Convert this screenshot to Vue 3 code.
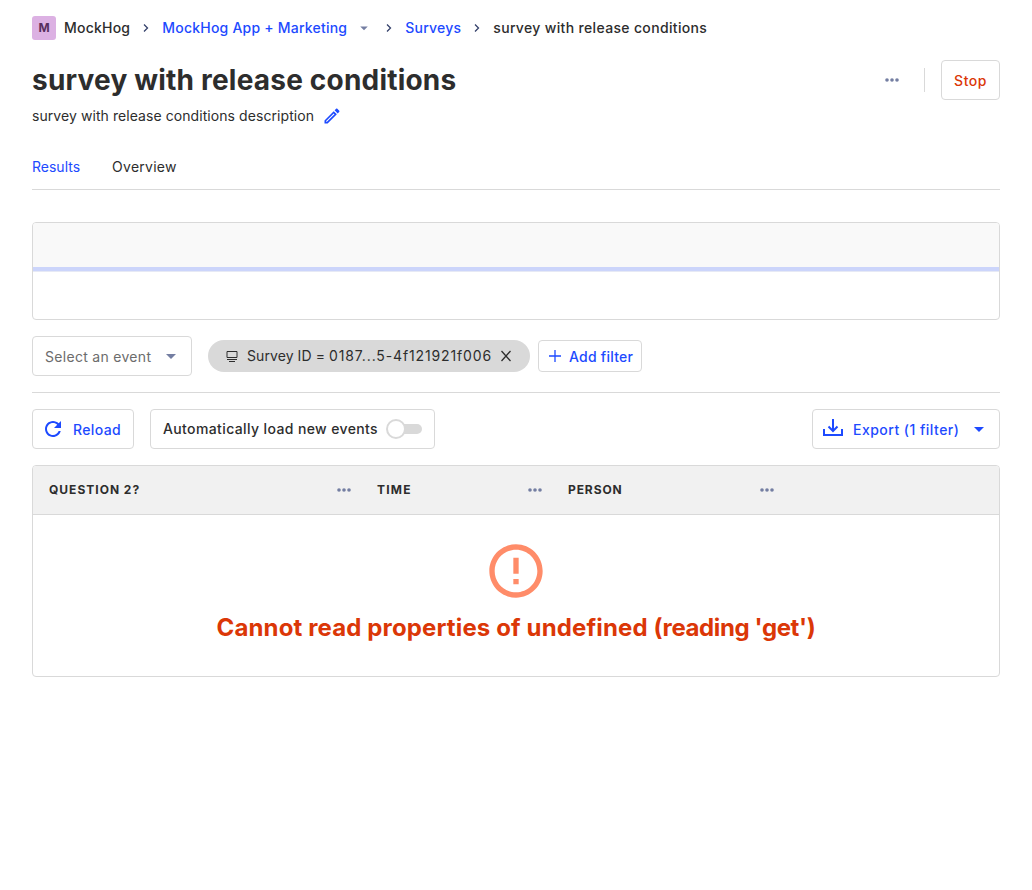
<script setup>
const columns = [
  { name: 'Question 2?', cls: 'col-question' },
  { name: 'Time', cls: 'col-time' },
  { name: 'Person', cls: 'col-person' },
]
</script>

<template>
  <main class="page">
    <nav class="breadcrumbs">
      <span class="lettermark">M</span>
      <span class="crumb first">MockHog</span>
      <svg class="chevron" viewBox="0 0 16 16"><path d="M6 4.5 9.5 8 6 11.5" /></svg>
      <a class="crumb link">MockHog App + Marketing</a>
      <svg class="small-caret" viewBox="0 0 24 24"><path d="M7 10l5 5 5-5z" /></svg>
      <svg class="chevron" viewBox="0 0 16 16"><path d="M6 4.5 9.5 8 6 11.5" /></svg>
      <a class="crumb link">Surveys</a>
      <svg class="chevron" viewBox="0 0 16 16"><path d="M6 4.5 9.5 8 6 11.5" /></svg>
      <span class="crumb current">survey with release conditions</span>
    </nav>

    <header class="title-row">
      <h1>survey with release conditions</h1>
      <div class="actions">
        <svg class="dots" viewBox="0 0 24 24"><circle cx="7" cy="12" r="1.8" /><circle cx="12" cy="12" r="1.8" /><circle cx="17" cy="12" r="1.8" /></svg>
        <span class="separator"></span>
        <button class="btn stop"><span>Stop</span></button>
      </div>
    </header>

    <div class="description">
      <span>survey with release conditions description</span>
      <svg viewBox="0 0 24 24"><path d="M14.06 9.02l.92.92L5.92 19H5v-.92l9.06-9.06M17.66 3c-.25 0-.51.1-.7.29l-1.83 1.83 3.75 3.75 1.83-1.83c.39-.39.39-1.02 0-1.41l-2.34-2.34c-.2-.2-.45-.29-.71-.29zm-3.6 3.19L3 17.25V21h3.75L17.81 9.94l-3.75-3.75z" /></svg>
    </div>

    <nav class="tabs">
      <a class="tab active">Results</a>
      <a class="tab overview">Overview</a>
    </nav>

    <section class="summary">
      <div class="summary-head"></div>
      <div class="loader"></div>
    </section>

    <div class="filters">
      <button class="btn select">
        <span>Select an event</span>
        <svg viewBox="0 0 24 24"><path d="M7 10l5 5 5-5z" /></svg>
      </button>
      <div class="pill">
        <svg class="event-icon" viewBox="0 0 14 14"><path d="M2 2.5h10v6H2zM2 10.5h10M4 12.5h6" /></svg>
        <span class="pill-text">Survey ID = <span class="pill-value">0187...5-4f121921f006</span></span>
        <svg class="close" viewBox="0 0 12 12"><path d="M1.5 1l9 10M10.5 1l-9 10" /></svg>
      </div>
      <button class="btn add">
        <svg viewBox="0 0 14 14"><path d="M7 1v12M1 7h12" /></svg>
        <span>Add filter</span>
      </button>
    </div>

    <div class="toolbar">
      <button class="btn reload">
        <svg viewBox="0 0 24 24"><path d="M17.65 6.35C16.2 4.9 14.21 4 12 4c-4.42 0-7.99 3.58-7.99 8s3.57 8 7.99 8c3.73 0 6.84-2.55 7.73-6h-2.08c-.82 2.33-3.04 4-5.65 4-3.31 0-6-2.69-6-6s2.69-6 6-6c1.66 0 3.14.69 4.22 1.78L13 11h7V4l-2.35 2.35z" /></svg>
        <span>Reload</span>
      </button>
      <label class="btn auto">
        <span>Automatically load new events</span>
        <span class="switch"><span class="track"></span><span class="handle"></span></span>
      </label>
      <button class="btn export">
        <svg class="download" viewBox="0 0 24 24"><path d="M3 12v6h18v-6M12 2v12M7.5 9.5l4.5 4.5 4.5-4.5" /></svg>
        <span>Export (1 filter)</span>
        <svg class="caret" viewBox="0 0 24 24"><path d="M7 10l5 5 5-5z" /></svg>
      </button>
    </div>

    <section class="table">
      <div class="thead">
        <div v-for="c in columns" :key="c.name" class="th" :class="c.cls">
          <span>{{ c.name }}</span>
          <svg class="dots" viewBox="0 0 24 24"><circle cx="7" cy="12" r="1.8" /><circle cx="12" cy="12" r="1.8" /><circle cx="17" cy="12" r="1.8" /></svg>
        </div>
      </div>
      <div class="error">
        <svg viewBox="0 0 24 24"><path d="M11 15h2v2h-2zm0-8h2v6h-2zm.99-5C6.47 2 2 6.48 2 12s4.47 10 9.99 10C17.52 22 22 17.52 22 12S17.52 2 11.99 2zM12 20c-4.42 0-8-3.58-8-8s3.58-8 8-8 8 3.58 8 8-3.58 8-8 8z" /></svg>
        <h2>Cannot read properties of undefined <span class="detail">(reading 'get')</span></h2>
      </div>
    </section>
  </main>
</template>

<style>
body { background: #fff; }
</style>

<style scoped>
* { box-sizing: border-box; }
.page { padding: 16px 32px; font: 400 14px/20px Inter, sans-serif; color: #2d2d2d; }
svg { flex: none; display: block; }
span, a, h1, h2 { white-space: nowrap; }
.breadcrumbs { display: flex; align-items: center; height: 24px; font-weight: 500; }
.lettermark { width: 24px; height: 24px; border-radius: 3px; background: #dcb1e3; color: #572e5e; font-weight: 700; font-size: 12px; line-height: 24px; text-align: center; margin-right: 8px; }
.crumb { letter-spacing: 0.22px; }
.current { letter-spacing: 0.34px; }
.link { color: #1d4aff; }
.chevron { width: 16px; height: 16px; margin: 0 8px; fill: none; stroke: #35416b; stroke-width: 1.3; }
.small-caret { width: 18px; height: 18px; margin: 0 0 0 8px; fill: #747ea2; }
.title-row { display: flex; justify-content: space-between; align-items: center; height: 40px; margin-top: 20px; }
h1 { margin: 0; font-size: 28px; line-height: 40px; font-weight: 700; letter-spacing: 0.2px; }
.actions { display: flex; align-items: center; }
.dots { width: 24px; height: 24px; fill: #747ea2; }
.separator { width: 1px; height: 24px; background: #d9d9d9; margin: 0 16px 0 20px; }
.btn { display: flex; align-items: center; height: 40px; padding: 0 12px; background: #fff; border: 1px solid #d9d9d9; border-radius: 4px; font: 500 14px/20px Inter, sans-serif; color: #1d4aff; }
.stop { color: #db3707; width: 59px; justify-content: center; letter-spacing: 0.5px; }
button > span { position: relative; top: 1px; }
.description { display: flex; align-items: center; height: 32px; letter-spacing: 0.07px; }
.description svg { width: 20px; height: 20px; margin-left: 8px; fill: #1d4aff; }
.tabs { display: flex; gap: 32px; height: 46px; margin-top: 12px; padding: 13px 0; margin-bottom: 32px; border-bottom: 1px solid #d9d9d9; }
.active { color: #1d4aff; }
.overview { letter-spacing: 0.25px; }
.summary { height: 98px; border: 1px solid #d9d9d9; border-radius: 4px; overflow: hidden; }
.summary-head { height: 44px; background: #f9f9f9; }
.loader { height: 5px; background: #ccd5fb; border-bottom: 1px solid #e6e9f5; }
.filters { display: flex; align-items: center; height: 73px; border-bottom: 1px solid #d9d9d9; }
.select { width: 160px; font-weight: 400; color: #6c6c6c; justify-content: space-between; padding-right: 8px; margin-right: 16px; letter-spacing: 0.3px; }
.select svg { width: 24px; height: 24px; fill: #747ea2; }
.pill { display: flex; align-items: center; width: 322px; height: 32px; padding-left: 17px; border-radius: 16px; background: #d9d9d9; margin-right: 8px; }
.pill-text { width: 245px; letter-spacing: 0.08px; }
.pill-value { letter-spacing: 0.87px; }
.event-icon { width: 14px; height: 14px; fill: none; stroke: #2d2d2d; stroke-width: 1; margin-right: 8px; }
.close { width: 12px; height: 12px; fill: none; stroke: #2d2d2d; stroke-width: 1.3; margin-left: 8px; }
.add { width: 104px; height: 32px; padding: 0 0 0 9px; letter-spacing: 0.24px; }
.add svg { width: 14px; height: 14px; fill: none; stroke: #1d4aff; stroke-width: 1.3; margin-right: 7px; }
.toolbar { display: flex; gap: 16px; margin: 16px 0; }
.reload { width: 102px; padding: 0 0 0 8px; letter-spacing: 0.37px; }
.reload svg { width: 24px; height: 24px; fill: #1d4aff; margin-right: 8px; }
.auto { width: 285px; color: #2d2d2d; justify-content: space-between; letter-spacing: 0.38px; }
.switch { position: relative; display: block; width: 36px; height: 20px; }
.track { position: absolute; left: 4px; right: 0; top: 5px; height: 10px; border-radius: 5px; background: #d9d9d9; }
.handle { position: absolute; left: 0; top: 0; width: 20px; height: 20px; border-radius: 50%; border: 2px solid #d9d9d9; background: #fff; }
.export { width: 188px; margin-left: auto; padding: 0 8px; letter-spacing: 0.48px; }
.download { width: 24px; height: 24px; fill: none; stroke: #1d4aff; stroke-width: 2; margin-right: 8px; }
.caret { width: 24px; height: 24px; fill: #1d4aff; margin-left: auto; }
.table { height: 212px; border: 1px solid #d9d9d9; border-radius: 4px; overflow: hidden; }
.thead { display: flex; height: 49px; background: #f1f1f1; border-bottom: 1px solid #d9d9d9; }
.th { display: flex; align-items: center; justify-content: space-between; padding: 0 5px 0 16px; font-size: 12px; font-weight: 700; letter-spacing: 1px; text-transform: uppercase; }
.th.col-question { width: 328px; }
.th.col-time { width: 191px; letter-spacing: 1.2px; }
.th.col-person { width: 232px; letter-spacing: 0.9px; }
.error { display: flex; flex-direction: column; align-items: center; color: #db3707; padding-top: 24px; }
.error svg { width: 64px; height: 64px; fill: #ff8c69; }
.error h2 { margin: 9px 0 0; font-size: 24px; line-height: 32px; font-weight: 700; letter-spacing: 0.13px; }
.detail { letter-spacing: -0.38px; }
</style>
